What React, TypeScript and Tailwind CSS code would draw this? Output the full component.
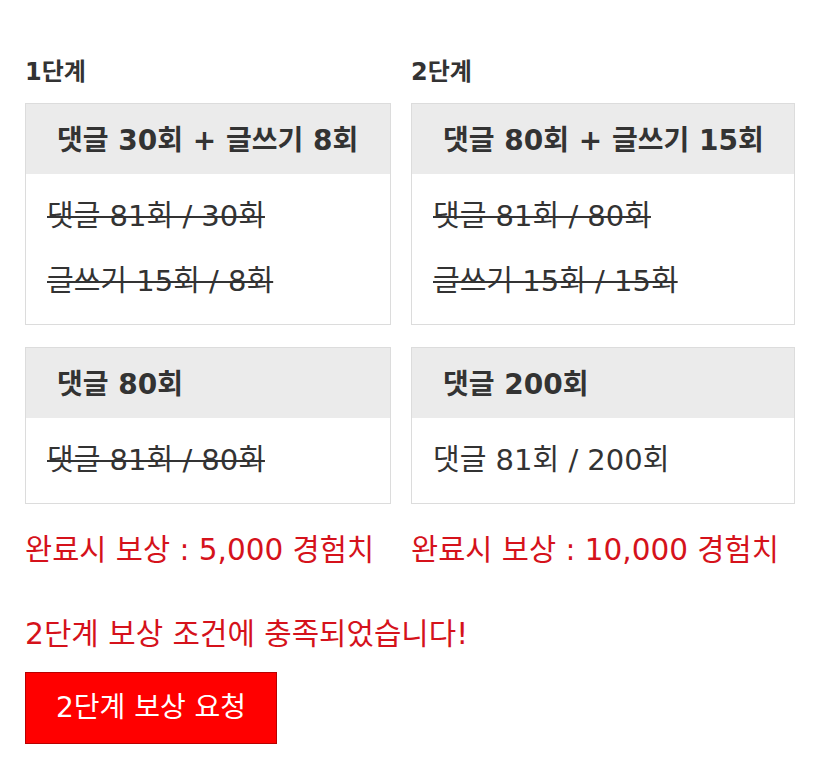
import React from "react";

type Card = {
  title: string;
  lines: { text: string; done: boolean }[];
};

const stages: { label: string; cards: Card[]; reward: string }[] = [
  {
    label: "1단계",
    cards: [
      {
        title: "댓글 30회 + 글쓰기 8회",
        lines: [
          { text: "댓글 81회 / 30회", done: true },
          { text: "글쓰기 15회 / 8회", done: true },
        ],
      },
      {
        title: "댓글 80회",
        lines: [{ text: "댓글 81회 / 80회", done: true }],
      },
    ],
    reward: "완료시 보상 : 5,000 경험치",
  },
  {
    label: "2단계",
    cards: [
      {
        title: "댓글 80회 + 글쓰기 15회",
        lines: [
          { text: "댓글 81회 / 80회", done: true },
          { text: "글쓰기 15회 / 15회", done: true },
        ],
      },
      {
        title: "댓글 200회",
        lines: [{ text: "댓글 81회 / 200회", done: false }],
      },
    ],
    reward: "완료시 보상 : 10,000 경험치",
  },
];

function MissionCard({ card }: { card: Card }) {
  return (
    <div className="border border-[#dcdcdc] bg-white">
      <div className="h-[70px] bg-[#ebebeb] flex items-center pl-[31px] pt-[4px] text-[28px] font-bold text-[#333]">
        {card.title}
      </div>
      <div className="py-[10px] pl-[21px]">
        {card.lines.map((l) => (
          <div
            key={l.text}
            className={`h-[65px] flex items-center text-[29px] text-[#333] ${
              l.done ? "line-through decoration-2" : ""
            }`}
          >
            {l.text}
          </div>
        ))}
      </div>
    </div>
  );
}

export default function App() {
  return (
    <div
      className="min-h-[782px] bg-white pl-[25px] pt-[56px]"
      style={{ fontFamily: '"DejaVu Sans", "Noto Sans CJK KR", sans-serif' }}
    >
      <div className="grid grid-cols-[366px_384px] gap-x-[20px]">
        {stages.map((s) => (
          <div key={s.label} className="flex flex-col">
            <div className="text-[24px] font-bold text-[#333] leading-[32px] mb-[15px]">
              {s.label}
            </div>
            <div className="flex flex-col gap-[22px]">
              {s.cards.map((c) => (
                <MissionCard key={c.title} card={c} />
              ))}
            </div>
            <div className="mt-[26px] text-[29.5px] text-[#d5121b] leading-[40px] whitespace-nowrap">
              {s.reward}
            </div>
          </div>
        ))}
      </div>
      <div className="mt-[44px] text-[29.8px] text-[#d5121b] leading-[40px]">
        2단계 보상 조건에 충족되었습니다!
      </div>
      <button className="mt-[18px] w-[252px] h-[72px] bg-[#ff0000] border border-[#b80000] text-white text-[28px]">
        2단계 보상 요청
      </button>
    </div>
  );
}
